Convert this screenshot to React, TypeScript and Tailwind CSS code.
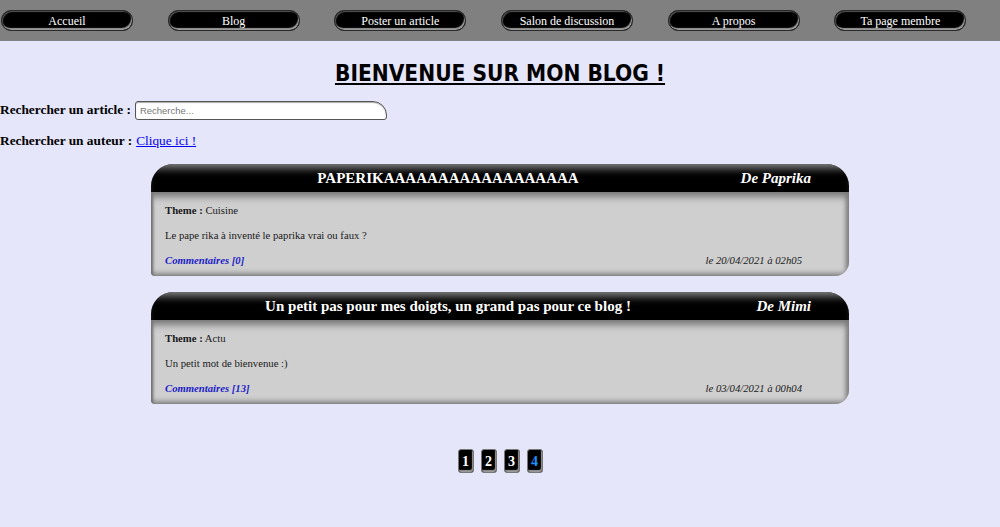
const links = [
  "Accueil",
  "Blog",
  "Poster un article",
  "Salon de discussion",
  "A propos",
  "Ta page membre",
];

const articles = [
  {
    title: "PAPERIKAAAAAAAAAAAAAAAAAA",
    author: "De Paprika",
    theme: "Cuisine",
    text: "Le pape rika à inventé le paprika vrai ou faux ?",
    comments: "Commentaires [0]",
    date: "le 20/04/2021 à 02h05",
  },
  {
    title: "Un petit pas pour mes doigts, un grand pas pour ce blog !",
    author: "De Mimi",
    theme: "Actu",
    text: "Un petit mot de bienvenue :)",
    comments: "Commentaires [13]",
    date: "le 03/04/2021 à 00h04",
  },
];

const ArticleCard = ({ a }: { a: (typeof articles)[number] }) => (
  <div className="rounded-tl-[22px] rounded-tr-[22px] rounded-br-[14px] rounded-bl-[4px] overflow-hidden">
    <div className="h-[28px] flex items-center bg-black text-white font-bold text-[15px] shadow-[inset_0_9px_9px_-5px_#8a8a8a]">
      <span className="flex-1 text-center whitespace-nowrap">{a.title}</span>
      <span className="w-[104px] pr-[38px] flex justify-end italic whitespace-nowrap">
        <span>{a.author}</span>
      </span>
    </div>
    <div className="h-[84px] bg-[#cfcfcf] px-[14px] pt-[11px] text-[10.7px] leading-[14px] text-[#1a1a1a] shadow-[inset_0_8px_7px_-3px_#7a7a7a,inset_3px_0_3px_-1px_#6a6a6a,inset_-5px_0_5px_-2px_#7a7a7a,inset_0_-5px_5px_-2px_#8a8a8a]">
      <p>
        <b>Theme :</b> {a.theme}
      </p>
      <p className="mt-[11px]">{a.text}</p>
      <div className="mt-[11px] flex justify-between italic">
        <span className="font-bold text-[#1c1cc8]">{a.comments}</span>
        <span className="pr-[33px]">{a.date}</span>
      </div>
    </div>
  </div>
);

export default function App() {
  return (
    <div className="min-h-screen bg-[#e6e6fa] font-['Liberation_Serif',serif] text-black">
      <nav className="h-[41px] bg-[#808080] grid grid-cols-6 items-center">
        {links.map((l) => (
          <a
            key={l}
            className="ml-[1px] w-[132px] h-[21px] flex items-center justify-center rounded-[10px] bg-black text-white text-[12px] border border-[#2a2a2a] shadow-[inset_-1px_-2px_1px_#9a9a9a,inset_1px_1px_1px_#555]"
          >
            {l}
          </a>
        ))}
      </nav>

      <h1 className="pt-[18px] leading-[28px] text-center text-[22.5px] font-bold underline font-['DejaVu_Sans_Condensed','DejaVu_Sans',sans-serif]">
        BIENVENUE SUR MON BLOG !
      </h1>

      <div className="mt-[13px] flex items-center h-[20px] text-[13.33px]">
        <b>Rechercher un article :</b>
        <input
          placeholder="Recherche..."
          className="ml-[4px] w-[252px] h-[19px] bg-white border border-[#555] rounded-[3px] rounded-tr-[14px] px-[4px] text-[9.5px] font-['Liberation_Sans',sans-serif] placeholder:text-[#777] shadow-[inset_0_1px_1px_#aaa]"
        />
      </div>

      <div className="mt-[11px] h-[20px] flex items-center text-[13.33px]">
        <b>Rechercher un auteur :</b>
        <a href="#" className="ml-[4px] text-[#0000ee] underline">
          Clique ici !
        </a>
      </div>

      <div className="mt-[13px] w-[698px] mx-auto flex flex-col gap-[16px]">
        {articles.map((a) => (
          <ArticleCard key={a.title} a={a} />
        ))}
      </div>

      <div className="mt-[45px] flex justify-center gap-[7px]">
        {[1, 2, 3, 4].map((n) => (
          <span
            key={n}
            className={`w-[16px] h-[24px] flex items-center justify-center rounded-[3px] bg-black border border-[#777] shadow-[inset_-1px_-2px_1px_#9a9a9a] text-[14px] font-bold ${n === 4 ? "text-[#1e90ff]" : "text-white"}`}
          >
            {n}
          </span>
        ))}
      </div>
    </div>
  );
}
